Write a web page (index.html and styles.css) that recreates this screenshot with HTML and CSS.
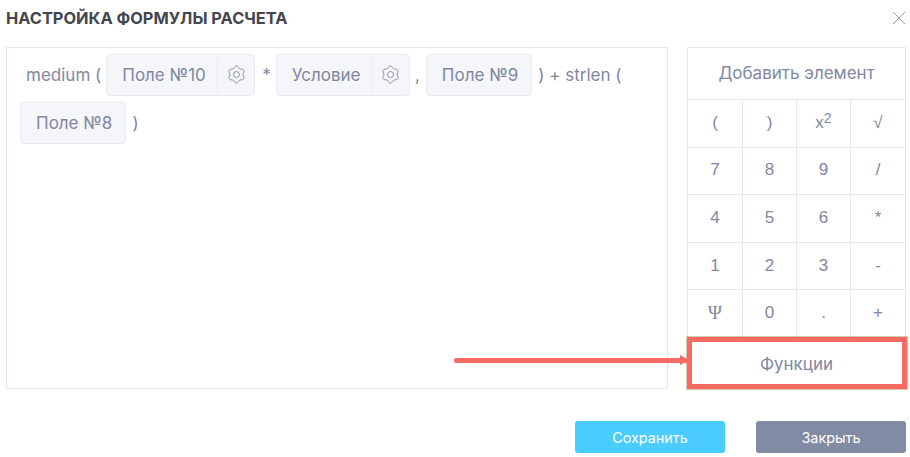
FILE: index.html
```html
<!DOCTYPE html>
<html lang="en">

<head>
    <meta charset="UTF-8">
    <title>Настройка формулы расчета</title>
    <link rel="stylesheet" href="styles.css">
</head>

<body>
    <div class="dialog">
        <div class="dialog-head">
            <h2>НАСТРОЙКА ФОРМУЛЫ РАСЧЕТА</h2>
            <svg class="close" width="14" height="14" viewBox="0 0 14 14">
                <path d="M1 1L13 13M13 1L1 13" />
            </svg>
        </div>

        <div class="dialog-body">
            <div class="formula">
                <span class="op first">medium (</span>
                <div class="chip">
                    <span class="chip-name has-gear">Поле №10</span>
                    <span class="chip-gear">
                        <svg width="19" height="19" viewBox="0 0 18 18">
                            <path d="M6.4 3.2C7.2 2.6 7.2 1 9 1C10.8 1 10.8 2.6 11.6 3.2L12.72 3.85C13.64 4.24 15.03 3.44 15.93 5C16.83 6.56 15.44 7.36 15.32 8.35L15.32 9.65C15.44 10.64 16.83 11.44 15.93 13C15.03 14.56 13.64 13.76 12.72 14.15L11.6 14.8C10.8 15.4 10.8 17 9 17C7.2 17 7.2 15.4 6.4 14.8L5.28 14.15C4.36 13.76 2.97 14.56 2.07 13C1.17 11.44 2.56 10.64 2.68 9.65L2.68 8.35C2.56 7.36 1.17 6.56 2.07 5C2.97 3.44 4.36 4.24 5.28 3.85Z" />
                            <circle cx="9" cy="9" r="2.8" />
                        </svg>
                    </span>
                </div>
                <span class="op star">*</span>
                <div class="chip">
                    <span class="chip-name has-gear">Условие</span>
                    <span class="chip-gear">
                        <svg width="19" height="19" viewBox="0 0 18 18">
                            <path d="M6.4 3.2C7.2 2.6 7.2 1 9 1C10.8 1 10.8 2.6 11.6 3.2L12.72 3.85C13.64 4.24 15.03 3.44 15.93 5C16.83 6.56 15.44 7.36 15.32 8.35L15.32 9.65C15.44 10.64 16.83 11.44 15.93 13C15.03 14.56 13.64 13.76 12.72 14.15L11.6 14.8C10.8 15.4 10.8 17 9 17C7.2 17 7.2 15.4 6.4 14.8L5.28 14.15C4.36 13.76 2.97 14.56 2.07 13C1.17 11.44 2.56 10.64 2.68 9.65L2.68 8.35C2.56 7.36 1.17 6.56 2.07 5C2.97 3.44 4.36 4.24 5.28 3.85Z" />
                            <circle cx="9" cy="9" r="2.8" />
                        </svg>
                    </span>
                </div>
                <span class="op comma">,</span>
                <div class="chip">
                    <span class="chip-name">Поле №9</span>
                </div>
                <span class="op">) + strlen (</span>
                <div class="chip">
                    <span class="chip-name">Поле №8</span>
                </div>
                <span class="op">)</span>
            </div>

            <div class="keypad">
                <div class="keypad-title">Добавить элемент</div>
                <div class="keys">
                    <div class="key">(</div>
                    <div class="key">)</div>
                    <div class="key">x<sup>2</sup></div>
                    <div class="key">√</div>
                    <div class="key">7</div>
                    <div class="key">8</div>
                    <div class="key">9</div>
                    <div class="key">/</div>
                    <div class="key">4</div>
                    <div class="key">5</div>
                    <div class="key">6</div>
                    <div class="key">*</div>
                    <div class="key">1</div>
                    <div class="key">2</div>
                    <div class="key">3</div>
                    <div class="key">-</div>
                    <div class="key key-psi">Ψ</div>
                    <div class="key">0</div>
                    <div class="key">.</div>
                    <div class="key">+</div>
                </div>
                <div class="keypad-func">Функции</div>
                <!-- пометка на скриншоте -->
                <div class="mark-box"></div>
                <div class="mark-arrow"></div>
            </div>
        </div>

        <div class="dialog-foot">
            <button class="btn btn-save">Сохранить</button>
            <button class="btn btn-close">Закрыть</button>
        </div>
    </div>
</body>

</html>
```

FILE: styles.css
```css
* {
    box-sizing: border-box;
}

body {
    margin: 0;
    background: #fff;
    font-family: Inter, "Liberation Sans", sans-serif;
    color: #8087a0;
}

.dialog {
    width: 910px;
    height: 457px;
    padding: 0 4px 0 6px;
}

.dialog-head {
    height: 47px;
    display: flex;
    justify-content: space-between;
    align-items: flex-start;
    padding-top: 9px;
}

.dialog-head h2 {
    margin: 0;
    font-size: 16.4px;
    line-height: 18px;
    font-weight: 700;
    color: #44464e;
}

.close {
    margin-top: 2px;
    fill: none;
    stroke: #9a9fb0;
    stroke-width: 1;
}

.dialog-body {
    display: flex;
    justify-content: space-between;
    height: 342px;
}

/* 公式 */
.formula {
    width: 662px;
    border: 1px solid #e6e8f0;
    padding: 6px 13px;
    display: flex;
    flex-wrap: wrap;
    align-items: flex-start;
    align-content: flex-start;
    row-gap: 6.4px;
}

.op {
    height: 41.6px;
    line-height: 42px;
    font-size: 17px;
    margin: 0 6px;
}

.op.first {
    margin: 0 5px 0 6px;
}

.op.star {
    margin: 0 5px 0 7px;
}

.op.comma {
    margin: 0 6px 0 5px;
}

.chip {
    height: 41.6px;
    display: flex;
    align-items: stretch;
    background: #f5f6fa;
    border: 1px solid #e9ebf2;
    border-radius: 4px;
}

.chip-name {
    padding: 0 13px 0 15px;
    line-height: 40px;
    font-size: 17px;
    white-space: nowrap;
}

.chip-name.has-gear {
    padding-right: 11.5px;
}

.chip-gear {
    width: 37px;
    margin: 2px 0;
    border-left: 1px solid #e9ebf2;
    display: flex;
    align-items: center;
    justify-content: center;
}

.chip-gear svg {
    fill: none;
    stroke: #8087a0;
    stroke-width: 0.9;
}

/* 按钮 */
.keypad {
    width: 219px;
    position: relative;
    border: 1px solid #e6e8f0;
    border-bottom: none;
}

.keypad-title {
    height: 52px;
    line-height: 51px;
    text-align: center;
    font-size: 17px;
    border-bottom: 1px solid #e6e8f0;
}

.keys {
    display: grid;
    grid-template-columns: 55px 54px 54px 54px;
    grid-auto-rows: 47.6px;
}

.key {
    display: flex;
    align-items: center;
    justify-content: center;
    padding-bottom: 1px;
    font-family: "Liberation Sans", sans-serif;
    font-size: 17px;
    border-right: 1px solid #e6e8f0;
    border-bottom: 1px solid #e6e8f0;
}

.key:nth-child(4n) {
    border-right: none;
}

.key sup {
    font-size: 14px;
    line-height: 0;
    margin-top: -10px;
}

.key-psi {
    font-family: "Liberation Serif", serif;
    font-size: 19px;
}

.keypad-func {
    height: 52px;
    line-height: 52px;
    text-align: center;
    font-size: 17px;
}

.mark-box {
    position: absolute;
    left: -1px;
    right: -2px;
    bottom: 0;
    height: 52px;
    border: 5px solid #f96a63;
    box-shadow: 0 0 0 1px rgba(170, 150, 100, 0.5);
}

.mark-arrow {
    position: absolute;
    left: -234px;
    bottom: 26px;
    width: 234px;
    height: 5px;
    background: #f96a63;
    border-radius: 2px;
}

.mark-arrow::after {
    content: "";
    position: absolute;
    right: -1px;
    top: -3px;
    border-left: 9px solid #f96a63;
    border-top: 5.5px solid transparent;
    border-bottom: 5.5px solid transparent;
}

.dialog-foot {
    display: flex;
    justify-content: flex-end;
    gap: 31px;
    padding-top: 32px;
}

.btn {
    width: 150px;
    height: 32px;
    border: none;
    border-radius: 3px;
    color: #fff;
    font-family: Inter, sans-serif;
    font-size: 14.4px;
}

.btn-save {
    background: #4accff;
}

.btn-close {
    background: #828ba4;
}
```
